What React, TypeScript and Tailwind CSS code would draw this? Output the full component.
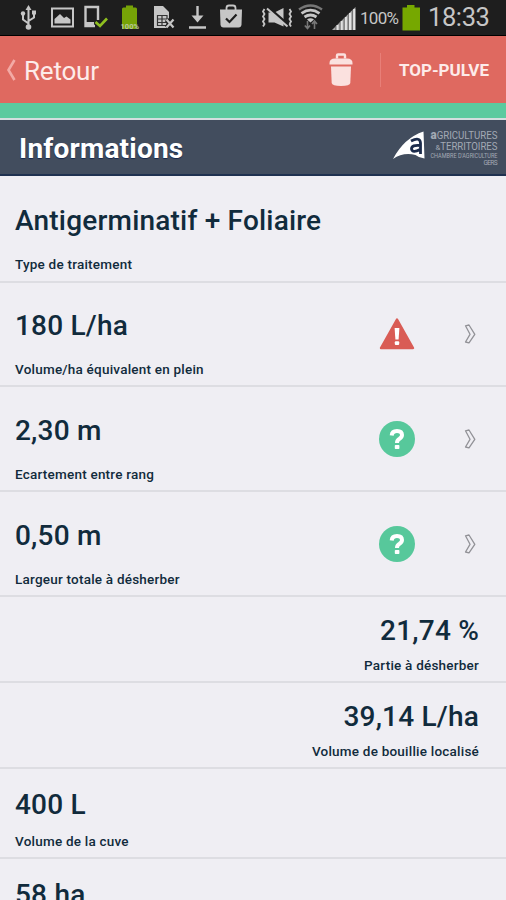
import type { ReactNode } from "react";

type Hint = "warning" | "help";

interface InfoItem {
    value: string;
    label?: string;
    hint?: Hint;
    rowClass: string;
    labelClass?: string;
}

const items: InfoItem[] = [
    { value: "Antigerminatif + Foliaire", label: "Type de traitement", rowClass: "h-[107px] pt-[29px]", labelClass: "mt-[19px]" },
    { value: "180 L/ha", label: "Volume/ha équivalent en plein", hint: "warning", rowClass: "h-[104px] pt-[27px]", labelClass: "mt-[19px]" },
    { value: "2,30 m", label: "Ecartement entre rang", hint: "help", rowClass: "h-[105px] pt-[28px]", labelClass: "mt-[19px]" },
    { value: "0,50 m", label: "Largeur totale à désherber", hint: "help", rowClass: "h-[105px] pt-[28px]", labelClass: "mt-[19px]" },
    { value: "21,74 %", label: "Partie à désherber", rowClass: "h-[86px] pt-[18px] text-right", labelClass: "mt-[10px]" },
    { value: "39,14 L/ha", label: "Volume de bouillie localisé", rowClass: "h-[86px] pt-[18px] text-right", labelClass: "mt-[10px]" },
    { value: "400 L", label: "Volume de la cuve", rowClass: "h-[90px] pt-[20px]", labelClass: "mt-[12px]" },
    { value: "58 ha", rowClass: "h-[90px] pt-[20px]" },
];

function StatusIcon({ x, width, className, children }: { x: number; width: number; className?: string; children: ReactNode }) {
    return (
        <svg width={width} height={36} viewBox={`${x} 0 ${width} 36`} className={`shrink-0 ${className ?? ""}`} fill="none">
            {children}
        </svg>
    );
}

function StatusBar() {
    return (
        <div className="flex shrink-0 h-9 bg-[#1e1e1e] border-b border-black pl-5 text-[#c6c6c6]">
            {/* usb */}
            <StatusIcon x={20} width={18}>
                <path d="M28.5 26V8M28.5 23.500L23 19.500V14M28.500 21L34 17.500V12" stroke="currentColor" strokeWidth="2" />
                <path d="M28.500 5L31.500 10H25.500Z" fill="currentColor" />
                <circle cx="28.500" cy="27" r="2.800" fill="currentColor" />
                <circle cx="23" cy="13.500" r="2.200" fill="currentColor" />
                <path d="M32 10.500h4v4h-4z" fill="currentColor" />
            </StatusIcon>
            {/* picture */}
            <StatusIcon x={51} width={23} className="ml-[13px]">
                <rect x="52" y="8.500" width="21" height="18" stroke="currentColor" strokeWidth="2" />
                <path d="M54.500 23.500V19L60 14L64 18L66.500 16.500L70.500 19.500V23.500Z" fill="currentColor" />
            </StatusIcon>
            {/* phone with check */}
            <StatusIcon x={84} width={25} className="ml-[10px]">
                <path d="M98 20V7H85.500V26H95" stroke="currentColor" strokeWidth="2.400" />
                <path d="M85 22h9v5h-9z" fill="currentColor" />
                <path d="M95.500 22L100 26L107 18.500" stroke="#8fc01f" strokeWidth="2.600" />
            </StatusIcon>
            {/* battery level */}
            <StatusIcon x={119} width={22} className="ml-[10px]">
                <path d="M122 9q0-1.500 1.500-1.500H126V5.500h7v2h2.500q1.500 0 1.500 1.500V29H122Z" fill="#76a307" />
                <text x="120.500" y="28.500" fontSize="7.500" fontWeight="700" textLength="18.500" fill="#b9c99c" fontFamily="Roboto, sans-serif">100%</text>
            </StatusIcon>
            {/* sim card */}
            <StatusIcon x={153} width={22} className="ml-[12px]">
                <path d="M154 6h9l6 6v16h-15z" fill="currentColor" />
                <path d="M157.500 15.500h9.500v10h-9.500z" stroke="#343434" strokeWidth="1.200" />
                <path d="M158 19h9M158 22.500h9M162 16v9" stroke="#343434" strokeWidth="1.200" />
                <path d="M166.500 19.500L173.500 27.500M173.500 19.500L166.500 27.500" stroke="#1e1e1e" strokeWidth="4.500" />
                <path d="M166.500 19.500L173.500 27.500M173.500 19.500L166.500 27.500" stroke="currentColor" strokeWidth="2.200" />
            </StatusIcon>
            {/* download */}
            <StatusIcon x={188} width={19} className="ml-[13px]">
                <path d="M197.500 6V21M189 27.500H206" stroke="currentColor" strokeWidth="2.400" />
                <path d="M191.500 15.500H203.500L197.500 22.500Z" fill="currentColor" />
            </StatusIcon>
            {/* store bag */}
            <StatusIcon x={219} width={24} className="ml-[12px]">
                <path d="M226.500 10V8q0-2.500 2.500-2.500h4q2.500 0 2.500 2.500v2" stroke="currentColor" strokeWidth="1.800" />
                <path d="M220 9.500h22l-0.500 15q-.2 3-3 3h-15q-2.800 0-3-3z" fill="currentColor" />
                <path d="M226 18.500L229.500 22L236.500 14.500" stroke="#1e1e1e" strokeWidth="2.200" />
            </StatusIcon>
            {/* vibrate / muted */}
            <StatusIcon x={261} width={32} className="ml-[18px]">
                <path d="M264.500 9l-1.500 2.500 1.500 2.500-1.500 2.500 1.500 2.500-1.500 2.500 1.500 2.500-1.500 2.500M289.500 9l1.500 2.500-1.500 2.500 1.500 2.500-1.500 2.500 1.500 2.500-1.500 2.500 1.500 2.500" stroke="currentColor" strokeWidth="1.800" />
                <path d="M268.500 12.500h6L283.500 8v18.500L274.500 22.500h-6z" fill="currentColor" />
                <path d="M269 8.500L288 25" stroke="#1e1e1e" strokeWidth="3.600" />
                <path d="M267 8.500L287.500 26.500" stroke="currentColor" strokeWidth="2" />
            </StatusIcon>
            {/* wifi */}
            <StatusIcon x={298} width={25} className="ml-[5px]">
                <path d="M299 9.500Q310.500 1.500 322 9.500" stroke="#777" strokeWidth="2.400" />
                <path d="M301.500 13.300Q310.500 7 319.500 13.300M304.500 17Q310.500 13 316.500 17" stroke="currentColor" strokeWidth="2.800" />
                <path d="M307 19.500Q310.500 17 314 19.500L310.500 22.500Z" fill="currentColor" />
                <path d="M307.500 21V28.500M304.800 25.500L307.500 28.500L310 25.500M314.500 29V21.500M312 24L314.500 21L317 24" stroke="#777" strokeWidth="1.600" />
            </StatusIcon>
            {/* signal */}
            <StatusIcon x={332} width={24} className="ml-[9px]">
                <path d="M332 30L355.500 7V30Z" fill="#a8a8a8" />
                <path d="M337.500 30V25M341.700 30V21M345.900 30V17M350 30V13M354.200 30V9" stroke="#e2e2e2" strokeWidth="2" />
                <path d="M335.800 30V26M340 30V22M344.200 30V18M348.400 30V14M352.500 30V10" stroke="#666" strokeWidth="0.800" />
            </StatusIcon>
            <span className="ml-[4px] w-[41px] pt-[7px] text-[17px] leading-[22px] tracking-[-0.7px]">100%</span>
            <StatusIcon x={402} width={18} className="ml-[1px]">
                <path d="M402.500 7.500H407V5h7.500v2.500H420V30.500H402.500Z" fill="#76a800" />
            </StatusIcon>
            <span className="ml-[8px] pt-[2px] text-[25.500px] leading-[30px] tracking-[-0.4px]">18:33</span>
        </div>
    );
}

function TrashIcon() {
    return (
        <svg width="24" height="34" viewBox="0 0 24 34" className="text-[#fbe1df]" fill="none">
            <path d="M8 5.500V2.500Q8 1.500 9 1.500H15Q16 1.500 16 2.500V5.500" stroke="currentColor" strokeWidth="2.400" />
            <path d="M0.500 11.500V10Q0.500 5.500 6 5.500H18Q23.500 5.500 23.500 10V11.500Z" fill="currentColor" />
            <path d="M2 13.500H22L21.300 30Q21 33 12 33Q3 33 2.700 30Z" fill="currentColor" />
        </svg>
    );
}

function Toolbar() {
    return (
        <div className="flex shrink-0 items-center h-[67px] bg-[#df6960] text-[#fdebea]">
            <svg width="10" height="22" viewBox="0 0 10 22" className="ml-[6px]" fill="none">
                <path d="M8.500 1L2.500 11L8.500 21" stroke="#f3aaa5" strokeWidth="2.600" />
            </svg>
            <span className="ml-[8px] pt-[2px] text-[26px] leading-[30px] tracking-[-0.2px]">Retour</span>
            <div className="ml-auto flex items-center">
                <TrashIcon />
                <div className="ml-[27px] h-[34px] w-px bg-[#e87f78]" />
                <span className="ml-[18px] mr-[17px] text-[17px] font-bold leading-6">TOP-PULVE</span>
            </div>
        </div>
    );
}

function ChamberLogo() {
    return (
        <svg width="108" height="40" viewBox="0 0 108 40" className="mr-[6px] shrink-0 overflow-visible">
            <path d="M1 32Q12 11 31.500 4.500L32.500 31.500Q27 31 23.500 28Q11 25 1 32Z" fill="#fff" />
            <path d="M19 14Q28 9.500 28.500 16V27M28.500 18.500Q19.500 17.500 19.500 22Q20.500 26.500 28 22.500" fill="none" stroke="#1c2c4c" strokeWidth="2.800" />
            <g fill="#a2a9b4" fontFamily="Roboto, sans-serif">
                <text x="38.500" y="12" fontSize="10" textLength="67" lengthAdjust="spacingAndGlyphs">
                    <tspan fontSize="12" fontWeight="900">a</tspan>GRICULTURES
                </text>
                <text x="43.500" y="23" fontSize="10" textLength="62" lengthAdjust="spacingAndGlyphs">
                    <tspan fontSize="8">&amp;</tspan>TERRITOIRES
                </text>
                <text x="38.500" y="31" fontSize="6.500" textLength="67" lengthAdjust="spacingAndGlyphs">CHAMBRE D'AGRICULTURE</text>
                <text x="91.500" y="38" fontSize="6.500" textLength="14">GERS</text>
            </g>
        </svg>
    );
}

function HintIcon({ hint }: { hint: Hint }) {
    if (hint === "warning") {
        return (
            <svg width="36" height="36" viewBox="0 0 36 36">
                <path d="M18 3.500L34 32H2Z" fill="#d95c55" stroke="#d95c55" strokeWidth="2.400" strokeLinejoin="round" />
                <path d="M15.600 12H20.400L19.600 23.500H16.400Z" fill="#fff" />
                <rect x="15.800" y="25.200" width="4.400" height="3.800" rx="1" fill="#fff" />
            </svg>
        );
    }

    return (
        <svg width="36" height="36" viewBox="0 0 36 36" fill="none">
            <circle cx="18" cy="18" r="18" fill="#57c89b" />
            <path d="M12.700 14.500Q13 10 18 10Q23 10 23 14Q23 16.200 20.500 17.800Q18 19.300 18 22" stroke="#fff" strokeWidth="4" />
            <rect x="15.800" y="24" width="4.600" height="4" rx="0.800" fill="#fff" />
        </svg>
    );
}

function InfoRow({ item }: { item: InfoItem }) {
    return (
        <li className={`flex shrink-0 px-[15px] border-b-2 border-[#dddde2] ${item.rowClass}`}>
            <div className="flex-1 pr-[12px]">
                <p className="text-[28px] leading-8 font-medium tracking-[0.2px]">{item.value}</p>
                {item.label && (
                    <p className={`text-[13.5px] leading-4 font-medium tracking-[0.22px] ${item.labelClass}`}>{item.label}</p>
                )}
            </div>
            {item.hint && (
                <div className="flex h-12 items-center">
                    <HintIcon hint={item.hint} />
                    <svg width="13" height="20" viewBox="0 0 13 20" className="ml-[48px] mr-[15px]" fill="none">
                        <path d="M2.500 1.800L6 1L11.800 10.300L6 18.800L2.500 18L7 10.300Z" stroke="#929297" strokeWidth="1.300" strokeLinejoin="round" />
                    </svg>
                </div>
            )}
        </li>
    );
}

function App() {
    return (
        <div className="flex flex-col w-full h-[900px] overflow-hidden bg-[#efeef3] font-['Roboto',sans-serif]">
            <StatusBar />
            <Toolbar />
            <div className="shrink-0 h-[15px] bg-[#5bca9f]" />
            <div className="flex shrink-0 items-center justify-between h-[58px] bg-[#424d5e] border-t-2 border-b-2 border-t-[#d3dedf] border-b-[#1f3150]">
                <h1 className="ml-[19px] pt-[4px] text-[28px] leading-8 font-bold text-white tracking-[0.2px] [text-shadow:0_1px_1px_#14264d]">
                    Informations
                </h1>
                <ChamberLogo />
            </div>
            <ul className="flex flex-col text-[#112b3c]">
                {items.map((item) => (
                    <InfoRow key={item.value} item={item} />
                ))}
            </ul>
        </div>
    );
}

export default App;
